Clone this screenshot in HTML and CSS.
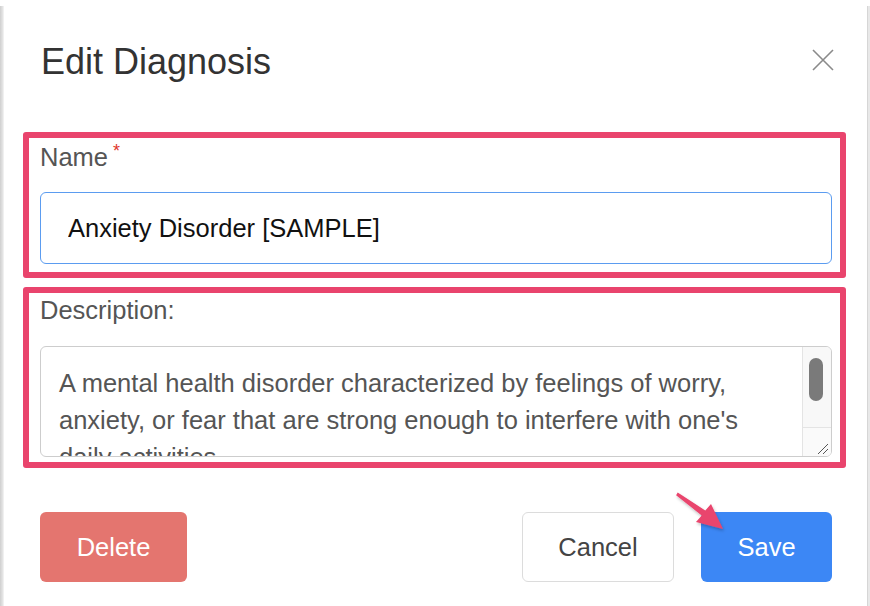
FILE: index.html
```html
<!DOCTYPE html>
<html lang="en">
<head>
<meta charset="utf-8">
<title>Edit Diagnosis</title>
<link rel="stylesheet" href="styles.css">
</head>
<body>
<div class="page">
  <div class="edge edge-left"></div>
  <div class="modal">
    <header class="modal-header">
      <h1 class="modal-title">Edit Diagnosis</h1>
      <button class="close-btn" type="button" aria-label="Close">
        <svg width="22" height="22" viewBox="0 0 22 22"><path d="M1 1L21 21M21 1L1 21" stroke="#8a8a8a" stroke-width="1.6" fill="none"/></svg>
      </button>
    </header>

    <div class="field hl hl-name">
      <label class="field-label" for="name">Name<span class="req">*</span></label>
      <input class="text-input" id="name" type="text" value="Anxiety Disorder [SAMPLE]">
    </div>

    <div class="field hl hl-desc">
      <label class="field-label">Description:</label>
      <div class="textarea">
        <div class="ta-text">A mental health disorder characterized by feelings of worry, anxiety, or fear that are strong enough to interfere with one's daily activities.</div>
        <div class="ta-bar">
          <div class="ta-track"><div class="ta-thumb"></div></div>
          <div class="ta-corner">
            <svg width="28" height="28" viewBox="0 0 28 28"><path d="M15 26L25 16M20 26L25 21" stroke="#555" stroke-width="1" fill="none"/></svg>
          </div>
        </div>
      </div>
    </div>

    <footer class="modal-footer">
      <button class="btn btn-delete" type="button">Delete</button>
      <div class="spacer"></div>
      <button class="btn btn-cancel" type="button">Cancel</button>
      <button class="btn btn-save" type="button">Save</button>
    </footer>
  </div>
  <div class="edge edge-right"></div>
</div>

<svg class="arrow" width="870" height="606" viewBox="0 0 870 606">
  <defs>
    <filter id="sh" x="-20%" y="-20%" width="140%" height="140%">
      <feDropShadow dx="1" dy="2" stdDeviation="1.5" flood-color="#000" flood-opacity="0.25"/>
    </filter>
  </defs>
  <polygon filter="url(#sh)" fill="#e9446d" points="677.7,492.6 705.3,510.6 711,504 723,529 696,522 701.7,515.4 676.1,495.2"/>
</svg>
</body>
</html>
```

FILE: styles.css
```css
html, body {
  margin: 0;
  padding: 0;
  background: #ffffff;
  font-family: "Liberation Sans", Arial, Helvetica, sans-serif;
}

.page {
  display: flex;
  width: 870px;
  height: 606px;
  overflow: hidden;
}

.edge {
  margin-top: 6px;
  flex: none;
}

.edge-left {
  width: 4px;
  background: linear-gradient(to right, #cfcfcf, #e2e2e2 60%, #f6f6f6);
}

.edge-right {
  width: 3px;
  background: #e8e8e8;
  border-left: 1px solid #d6d6d6;
  box-sizing: border-box;
}

.modal {
  flex: 1;
  background: #fff;
  padding: 0 21px 0 19px;
  display: flex;
  flex-direction: column;
}

.modal-header {
  display: flex;
  align-items: center;
  justify-content: space-between;
  padding: 40px 0 0 18px;
  margin-bottom: 48px;
}

.modal-title {
  margin: 0;
  font-size: 36px;
  line-height: 44px;
  font-weight: 400;
  color: #333;
}

.close-btn {
  border: 0;
  background: none;
  padding: 0;
  margin: 0 12px 4px 0;
  width: 22px;
  height: 22px;
  display: flex;
}

.hl {
  border: 6px solid #e9446d;
  border-radius: 3px;
}

.field {
  display: flex;
  flex-direction: column;
}

.hl-name {
  padding: 4px 8px 8px 11px;
  margin-bottom: 9px;
}

.hl-desc {
  padding: 2px 8px 5px 11px;
}

.field-label {
  font-size: 25.5px;
  line-height: 30px;
  height: 30px;
  color: #555;
}

.hl-name .field-label {
  margin-bottom: 20px;
}

.hl-desc .field-label {
  margin-bottom: 21px;
}

.req {
  color: #e0362c;
  font-size: 18px;
  line-height: 0;
  margin-left: 5px;
  vertical-align: 9px;
}

.text-input {
  box-sizing: border-box;
  height: 72px;
  width: 100%;
  border: 1px solid #5b9cf0;
  border-radius: 6px;
  padding: 0 20px 0 27px;
  font-family: inherit;
  font-size: 25.5px;
  color: #111;
  outline: none;
  background: #fff;
}

.textarea {
  box-sizing: border-box;
  height: 111px;
  border: 1px solid #cdcdcd;
  border-radius: 6px;
  display: flex;
  overflow: hidden;
}

.ta-text {
  flex: 1;
  padding: 18px 18px 0 18px;
  font-size: 25.5px;
  line-height: 37px;
  color: #555;
  overflow: hidden;
}

.ta-bar {
  width: 28px;
  flex: none;
  border-left: 1px solid #e4e4e4;
  background: #f8f8f8;
  display: flex;
  flex-direction: column;
}

.ta-track {
  flex: 1;
  padding: 11px 0 0 6px;
}

.ta-thumb {
  width: 14px;
  height: 43px;
  border-radius: 7px;
  background: #7a7a7a;
}

.ta-corner {
  height: 28px;
  border-top: 1px solid #e4e4e4;
  background: #fafafa;
  display: flex;
}

.modal-footer {
  display: flex;
  align-items: center;
  margin-top: 44px;
  padding: 0 14px 0 17px;
}

.spacer {
  flex: 1;
}

.btn {
  height: 70px;
  border-radius: 6px;
  font-family: inherit;
  font-size: 25.5px;
  padding: 0;
  box-sizing: border-box;
}

.btn-delete {
  width: 147px;
  background: #e4756f;
  border: 0;
  color: #fff;
}

.btn-cancel {
  width: 152px;
  background: #fff;
  border: 1px solid #dcdcdc;
  color: #444;
  margin-right: 27px;
}

.btn-save {
  width: 131px;
  background: #3c87f5;
  border: 0;
  color: #fff;
}

.arrow {
  position: absolute;
  left: 0;
  top: 0;
  pointer-events: none;
}
```
